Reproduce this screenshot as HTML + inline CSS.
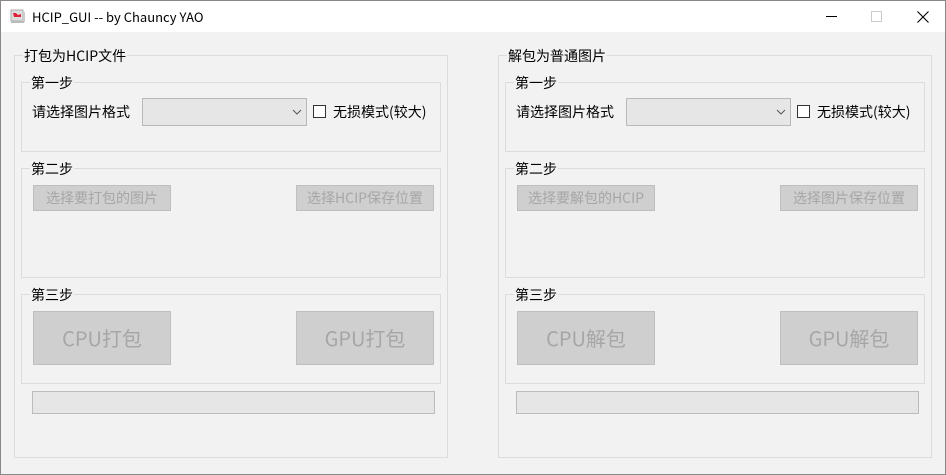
<!DOCTYPE html>
<html><head><meta charset="utf-8"><style>
*{margin:0;padding:0;box-sizing:border-box}
body{width:946px;height:475px;overflow:hidden;background:#f0f0f0;font-family:"Microsoft YaHei","Noto Sans CJK SC","Liberation Sans",sans-serif;font-size:14px;color:#000;position:relative}
.win{position:absolute;left:0;top:0;width:946px;height:475px;border:1px solid #888;background:#f2f2f2}
.tb{position:absolute;left:0;top:0;width:944px;height:31px;background:#fff}
.a{position:absolute}
.g{position:absolute;border:1px solid #dcdcdc}
.lbl{position:absolute;background:#f2f2f2;padding:0 1px;line-height:16px;white-space:nowrap}
.btn{position:absolute;background:#cfcfcf;border:1px solid #bfbfbf;color:#a6a6a6;text-align:center;white-space:nowrap}
.cb{position:absolute;background:#e6e6e6;border:1px solid #b9b9b9}
.chk{position:absolute;width:13px;height:13px;border:1px solid #333;background:#fff}
.pb{position:absolute;background:#e6e6e6;border:1px solid #bcbcbc}
</style></head><body>
<div class="win">
<div class="tb">
<svg class="a" style="left:9px;top:8px" width="16" height="16"><rect x="1" y="1" width="12" height="11" fill="#ddd" stroke="#aaa"/><rect x="12" y="3" width="3" height="10" fill="#ccc"/><rect x="1" y="12" width="13" height="2" fill="#bbb"/><path d="M3 4h3l2 2 3-1v3H4z" fill="#e0203a"/></svg>
<div class="a" style="left:31px;top:7px;font-size:13px;line-height:17px">HCIP_GUI -- by Chauncy YAO</div>
<div class="a" style="left:825px;top:15px;width:11px;height:1px;background:#000"></div>
<div class="a" style="left:870px;top:10px;width:11px;height:11px;border:1px solid #ccc"></div>
<svg class="a" style="left:916px;top:10px" width="12" height="12"><path d="M0.5 0.5L11.5 11.5M11.5 0.5L0.5 11.5" stroke="#000" stroke-width="1.1"/></svg>
</div>
</div>
<div id="L"></div>
<script>
function panel(ox,t,b2a,b2b,b3a,b3b){
var h='';
h+='<div class="g" style="left:'+(14+ox)+'px;top:55px;width:434px;height:403px"></div>';
h+='<div class="lbl" style="left:'+(23+ox)+'px;top:48px">'+t+'</div>';
h+='<div class="g" style="left:'+(21+ox)+'px;top:82px;width:420px;height:70px"></div>';
h+='<div class="lbl" style="left:'+(30+ox)+'px;top:75px">第一步</div>';
h+='<div class="lbl" style="left:'+(31+ox)+'px;top:104px">请选择图片格式</div>';
h+='<div class="cb" style="left:'+(142+ox)+'px;top:98px;width:165px;height:28px"></div>';
h+='<svg class="a" style="left:'+(292+ox)+'px;top:109px" width="10" height="6"><path d="M1 1l4 4 4-4" fill="none" stroke="#555"/></svg>';
h+='<div class="chk" style="left:'+(313+ox)+'px;top:105px"></div>';
h+='<div class="lbl" style="left:'+(332+ox)+'px;top:104px">无损模式(较大)</div>';
h+='<div class="g" style="left:'+(21+ox)+'px;top:168px;width:420px;height:110px"></div>';
h+='<div class="lbl" style="left:'+(30+ox)+'px;top:161px">第二步</div>';
h+='<div class="btn" style="left:'+(33+ox)+'px;top:185px;width:138px;height:26px;line-height:24px">'+b2a+'</div>';
h+='<div class="btn" style="left:'+(296+ox)+'px;top:185px;width:138px;height:26px;line-height:24px">'+b2b+'</div>';
h+='<div class="g" style="left:'+(21+ox)+'px;top:294px;width:420px;height:90px"></div>';
h+='<div class="lbl" style="left:'+(30+ox)+'px;top:287px">第三步</div>';
h+='<div class="btn" style="left:'+(33+ox)+'px;top:311px;width:138px;height:54px;line-height:52px;font-size:20px">'+b3a+'</div>';
h+='<div class="btn" style="left:'+(296+ox)+'px;top:311px;width:138px;height:54px;line-height:52px;font-size:20px">'+b3b+'</div>';
h+='<div class="pb" style="left:'+(32+ox)+'px;top:391px;width:403px;height:23px"></div>';
return h;}
document.getElementById('L').innerHTML=panel(0,'打包为HCIP文件','选择要打包的图片','选择HCIP保存位置','CPU打包','GPU打包')+panel(484,'解包为普通图片','选择要解包的HCIP','选择图片保存位置','CPU解包','GPU解包');
</script>
</body></html>
